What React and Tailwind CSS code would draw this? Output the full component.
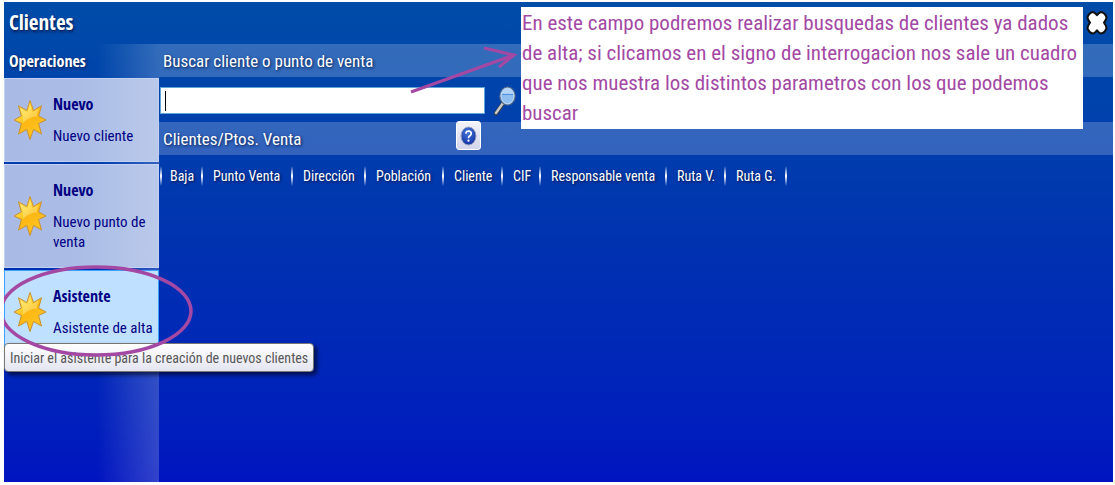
import React from 'react';

const operations = [
  { title: 'Nuevo', text: 'Nuevo cliente', size: 'h-[84px]' },
  { title: 'Nuevo', text: 'Nuevo punto de venta', size: 'h-[104px]' },
  {
    title: 'Asistente',
    text: 'Asistente de alta',
    size: 'h-[84px]',
    active: true,
    tip: 'Iniciar el asistente para la creación de nuevos clientes',
  },
];

const columns = [
  { label: 'Baja', width: 'w-[43px]' },
  { label: 'Punto Venta', width: 'w-[90px]' },
  { label: 'Dirección', width: 'w-[73px]' },
  { label: 'Población', width: 'w-[78px]' },
  { label: 'Cliente', width: 'w-[59px]' },
  { label: 'CIF', width: 'w-[38px]' },
  { label: 'Responsable venta', width: 'w-[126px]' },
  { label: 'Ruta V.', width: 'w-[59px]' },
  { label: 'Ruta G.', width: 'w-[61px]' },
];

function StarIcon() {
  return (
    <svg viewBox="0 0 34 42" className="h-[42px] w-[34px] shrink-0" aria-hidden="true">
      <defs>
        <linearGradient id="star" x1="0" y1="0" x2="0.7" y2="1">
          <stop offset="0" stopColor="#ffe98a" />
          <stop offset="0.4" stopColor="#ffd02c" />
          <stop offset="0.55" stopColor="#fdb813" />
          <stop offset="1" stopColor="#ffc528" />
        </linearGradient>
      </defs>
      <path
        d="M17 1.5 L20.5 11.5 L28.5 6.8 L25.6 17 L33 21 L25.6 24.5 L28.5 35 L20.5 30.5 L17 40.5 L13.8 30.5 L5.5 35 L8.4 24.5 L1 21 L8.4 17 L5.5 6.8 L13.8 11.5 Z"
        fill="url(#star)"
        stroke="#c99032"
        strokeWidth="1"
        strokeLinejoin="round"
      />
      <path d="M17 5 L19.3 13 L25.5 9.5 L23.5 17.5 Q16 18 9.5 24 L10 18 L7.5 9.5 L14.5 13 Z" fill="#fff3a8" opacity="0.4" />
    </svg>
  );
}

function SearchIcon() {
  return (
    <svg viewBox="0 0 22 30" className="h-[30px] w-[22px]" aria-hidden="true">
      <path d="M9 17.5 L2 27.5" stroke="#39404d" strokeWidth="4" strokeLinecap="round" />
      <path d="M8.7 17.5 L2 27" stroke="#c9c9c9" strokeWidth="2.4" strokeLinecap="round" />
      <ellipse cx="13.5" cy="10" rx="7.6" ry="9" fill="#8fbdf0" stroke="#53688a" strokeWidth="1.2" />
      <ellipse cx="13.5" cy="10" rx="6.5" ry="7.8" fill="none" stroke="#c3dcf5" strokeWidth="0.9" />
      <path d="M7.6 8 Q8.5 2.6 13.5 2.5 Q18.5 2.6 19.4 8 Z" fill="#b4d5f7" />
      <path d="M8 8.4 H19" stroke="#4e8fdb" strokeWidth="1" />
    </svg>
  );
}

function HelpIcon() {
  return (
    <svg viewBox="0 0 17 20" className="h-5 w-[17px]" aria-hidden="true">
      <defs>
        <radialGradient id="help" cx="0.45" cy="0.3" r="0.8">
          <stop offset="0" stopColor="#4778dc" />
          <stop offset="1" stopColor="#0a2a9a" />
        </radialGradient>
      </defs>
      <ellipse cx="8.5" cy="10" rx="7.5" ry="9" fill="url(#help)" stroke="#98a3c0" />
      <path d="M5.9 7.6 Q6 5 8.6 5 Q11.2 5.1 11.2 7.5 Q11.2 9 9.6 10 Q8.5 10.7 8.5 12.2" fill="none" stroke="#fff" strokeWidth="1.7" />
      <circle cx="8.5" cy="14.7" r="1.1" fill="#fff" />
    </svg>
  );
}

function CloseIcon() {
  return (
    <svg viewBox="0 0 22 26" className="h-[26px] w-[22px]" aria-hidden="true">
      <path
        d="M7 2 Q9 2.6 11 5.2 Q13 2.6 15 2 Q18.5 2.5 20.5 7 Q20.6 9.5 18 12.7 Q20.6 16 20.5 18.5 Q18.5 23 15 23.6 Q13 23 11 20.3 Q9 23 7 23.6 Q3.5 23 1.5 18.5 Q1.4 16 4 12.7 Q1.4 9.5 1.5 7 Q3.5 2.5 7 2 Z"
        fill="#fff"
        stroke="#111"
        strokeWidth="2"
        strokeLinejoin="round"
      />
    </svg>
  );
}

function Operation({ title, text, size, active, tip }) {
  const look = active
    ? 'border-[#3da0ff] bg-[#c0e0ff]'
    : 'border-[#c3d2f2] bg-linear-to-r from-[#a9bbe5] via-[#abbde6] to-[#bac9ea]';
  return (
    <li className="relative">
      <button
        type="button"
        className={`flex w-full items-center gap-[6px] border pl-2 text-left text-[#000082] ${look} ${size}`}
      >
        <StarIcon />
        <span className="flex flex-1 flex-col gap-3 text-[15px] leading-5">
          <strong className="font-['Open_Sans_Condensed','Open_Sans',sans-serif] text-base leading-5 font-bold">
            {title}
          </strong>
          <span>{text}</span>
        </span>
      </button>
      {tip && (
        <span
          role="tooltip"
          className="absolute top-[73px] left-0 flex h-[29px] items-center rounded-sm border border-[#767676] bg-linear-to-b from-white to-[#e4e5f0] px-[5px] text-sm whitespace-nowrap text-[#575757] shadow-[3px_3px_4px_rgba(0,0,0,0.6)]"
        >
          {tip}
        </span>
      )}
    </li>
  );
}

function Separator({ side }) {
  return (
    <span
      className={`absolute top-1 h-5 w-0.5 bg-linear-to-b from-transparent via-white to-transparent ${side}`}
    />
  );
}

export default function App() {
  return (
    <div className="flex min-h-screen flex-col bg-white pt-0.5 pr-0.5 pb-[3px] pl-1 font-['Roboto_Condensed','Roboto',sans-serif]">
      <div className="relative flex flex-1 flex-col bg-linear-to-b from-[#004ca8] via-[#0032b0] to-[#0014c0]">
        <header className="flex h-[42px] items-center justify-between px-[5px]">
          <h1 className="font-['Open_Sans_Condensed','Open_Sans',sans-serif] text-[21px] font-bold text-white [text-shadow:1px_2px_3px_#001c50]">
            Clientes
          </h1>
          <button type="button" aria-label="Cerrar">
            <CloseIcon />
          </button>
        </header>

        <div className="flex flex-1">
          <aside className="flex w-[155px] shrink-0 flex-col bg-linear-to-r from-transparent from-60% to-white/20">
            <h2 className="flex h-[34px] items-center pl-[5px] font-['Open_Sans_Condensed','Open_Sans',sans-serif] text-base font-bold text-white [text-shadow:1px_1px_3px_#001c50]">
              Operaciones
            </h2>
            <ul className="flex flex-col gap-0.5">
              {operations.map((item) => (
                <Operation key={item.text} {...item} />
              ))}
            </ul>
          </aside>

          <main className="min-w-0 flex-1 text-white">
            <h2 className="flex h-[33px] items-center bg-white/20 pt-0.5 pl-1 text-[17px] [text-shadow:1px_1px_3px_#001c50]">
              <label htmlFor="search">Buscar cliente o punto de venta</label>
            </h2>
            <form className="flex h-[45px] items-center gap-[9px] pt-0.5 pl-px">
              <div className="relative flex items-center">
                <input
                  id="search"
                  type="text"
                  className="h-[27px] w-[325px] border border-[#5fa5d8] bg-white px-1 text-[17px] text-black outline-none"
                />
                <span className="absolute left-[5px] h-5 w-px bg-black" />
              </div>
              <button type="button" aria-label="Buscar">
                <SearchIcon />
              </button>
            </form>
            <div className="flex h-[33px] items-center bg-white/20 pt-0.5 pl-1">
              <h2 className="w-[293px] text-[17px] [text-shadow:1px_1px_3px_#001c50]">Clientes/Ptos. Venta</h2>
              <button
                type="button"
                aria-label="Ayuda"
                className="-mt-2 flex h-[29px] w-[25px] items-center justify-center rounded-[3px] border border-white bg-linear-to-b from-[#f3f3fa] to-[#d3d5ea]"
              >
                <HelpIcon />
              </button>
            </div>
            <table className="mt-[7px] ml-px w-[627px] table-fixed text-sm [text-shadow:1px_1px_3px_#001040]">
              <thead>
                <tr>
                  {columns.map((column, index) => (
                    <th
                      key={column.label}
                      scope="col"
                      className={`relative h-7 p-0 pl-[10px] text-left font-normal whitespace-nowrap ${column.width}`}
                    >
                      {index === 0 && <Separator side="left-0" />}
                      {column.label}
                      <Separator side="right-0" />
                    </th>
                  ))}
                </tr>
              </thead>
            </table>
          </main>
        </div>

        <p className="absolute top-[5px] left-[517px] w-[562px] bg-white pt-px pb-px pl-px text-[21px] leading-[30px] text-[#a349a4]">
          En este campo podremos realizar busquedas de clientes ya dados de alta; si clicamos en el signo de
          interrogacion nos sale un cuadro que nos muestra los distintos parametros con los que podemos buscar
        </p>

        <svg viewBox="0 0 520 380" className="pointer-events-none absolute top-0 left-0 h-[380px] w-[520px]" aria-hidden="true">
          <ellipse cx="92" cy="309" rx="95" ry="44" fill="none" stroke="#a349a4" strokeWidth="3.5" />
          <path d="M407 90 L510 53 M480 46 L510 53 L495 65" fill="none" stroke="#a349a4" strokeWidth="3.2" />
        </svg>
      </div>
    </div>
  );
}
